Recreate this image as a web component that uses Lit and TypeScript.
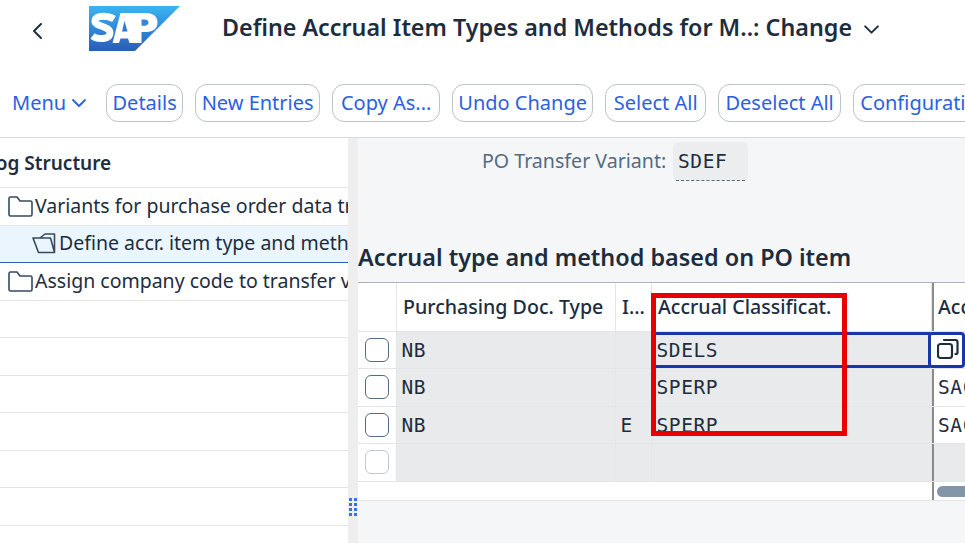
import { LitElement, html, css, svg } from "lit";
import { customElement } from "lit/decorators.js";

const chevron = (w: number, color: string) => html`<svg width=${w} height=${w} viewBox="0 0 16 16" fill="none" stroke=${color} stroke-width="1.8" stroke-linecap="round" stroke-linejoin="round"><path d="M2 5l6 6 6-6"/></svg>`;

const folder = html`<svg class="ico" width="25" height="21" viewBox="0 0 25 21" fill="none" stroke="#354a5f" stroke-width="1.6" stroke-linejoin="round"><path d="M1 5V2.500Q1 1 2.500 1H9l3 4h10.500Q24 5 24 6.500V18.500Q24 20 22.500 20H2.500Q1 20 1 18.500Z"/></svg>`;

const openFolder = html`<svg class="ico" width="24" height="21" viewBox="0 0 24 21" fill="none" stroke="#354a5f" stroke-width="1.6" stroke-linejoin="round"><path d="M1 5H8L13 1H22.500V19.500H6.500ZM8 5H18.500L22.500 19.500"/></svg>`;

const logo = svg`<svg width="91" height="45" viewBox="0 0 91 45">
  <defs><linearGradient id="g" x1="0" y1="0" x2="0" y2="1"><stop offset="0" stop-color="#3ab4f2"/><stop offset="1" stop-color="#2a5cb8"/></linearGradient></defs>
  <path d="M0 0H91L46 45H0Z" fill="url(#g)"/>
  <path fill="none" stroke="#fff" stroke-width="7" d="M25 13C19 9.500 7 8.500 6 14.500 5 21 21 19.500 21 27 21 33.500 9 34 3.500 30"/>
  <path fill="#fff" d="M23.500 37L31.500 7H44V37H40.500L39 32.500H31.500L30 37Z"/>
  <path fill="#fff" d="M43 7H57.500C64 7 68.500 10.500 68.500 16.500C68.500 22.500 64 26 57.500 26H52.500V37H43Z"/>
  <path fill="#2f78cf" d="M35.500 15L33 25.500H38.500Z"/>
  <path fill="#3a85d8" d="M52.500 13.500V19.800H55.500C58 19.800 59.500 18.500 59.500 16.600C59.500 14.700 58 13.500 55.500 13.500Z"/>
</svg>`;

@customElement("app-root")
export class AppRoot extends LitElement {
  static styles = css`
    :host { display: block; width: 965px; height: 543px; overflow: hidden; position: relative; background: #fff; font-family: "Noto Sans", "Open Sans", sans-serif; color: #1d2d3e; }
    svg { display: block; flex: none; }
    .head { height: 66px; display: flex; align-items: center; }
    .back { margin-left: 31px; width: 58px; }
    .back svg { margin-top: -4px; }
    .logo { margin-top: -9px; }
    .title { margin-left: 42px; font-size: 23.3px; font-weight: 600; line-height: 1; margin-top: -11px; white-space: nowrap; }
    .title-chev { margin: -7px 0 0 11px; }
    .bar { height: 72px; box-sizing: border-box; border-bottom: 1.5px solid #d9dadb; display: flex; align-items: flex-start; padding: 18px 0 0 12px; gap: 12px; font-size: 20px; white-space: nowrap; overflow: hidden; line-height: 36px; }
    .menu { height: 38px; display: flex; align-items: center; gap: 5px; margin-right: 7px; color: #2b5fe3; }
    .btn { height: 38px; box-sizing: border-box; border: 1.5px solid #bcc3ca; border-radius: 12px; display: flex; align-items: center; justify-content: center; flex: none; color: #2b5fe3; }
    .body { display: flex; height: 405px; }
    .left { width: 348px; flex: none; overflow: hidden; background: #fff; }
    .lhead { height: 50px; box-sizing: border-box; border-bottom: 1.5px solid #e5e5e5; font-size: 19px; font-weight: 600; line-height: 50px; margin-left: -40px; white-space: nowrap; }
    .lrow { height: 37.500px; box-sizing: border-box; border-bottom: 1.5px solid #e5e5e5; display: flex; align-items: center; gap: 2px; padding-left: 8px; font-size: 19.500px; white-space: nowrap; overflow: hidden; }
    .lrow span { margin-top: -2px; }
    .lrow.sel { background: #ebf5fe; border-bottom: 1.5px solid #2f5fc4; padding-left: 32px; gap: 3px; }
    .split { width: 10px; flex: none; background: #eeeeee; }
    .right { flex: 1; min-width: 0; background: #f5f6f7; display: flex; flex-direction: column; overflow: hidden; }
    .form { display: flex; align-items: flex-start; height: 104px; padding: 4px 0 0 124px; box-sizing: border-box; gap: 6px; }
    .lab { flex: none; width: 185px; color: #556b82; font-size: 19.600px; line-height: 39px; white-space: nowrap; margin-top: -1px; }
    .inp { width: 75px; height: 39px; box-sizing: border-box; background: #ecedee; border-radius: 6px; font-family: "DejaVu Sans Mono", "Liberation Mono", monospace; font-size: 19.500px; padding: 7px 0 0 5px; line-height: 26px; position: relative; letter-spacing: .6px; }
    .inp i { position: absolute; left: 3px; right: 3px; bottom: 0; border-bottom: 1.5px dashed #556b82; }
    h2 { margin: 0; height: 40px; font-size: 23.400px; font-weight: 600; line-height: 30px; white-space: nowrap; }
    .grid { border-top: 1.5px solid #a9b4be; width: 650px; background: #fff; }
    .row { display: grid; grid-template-columns: 39px 219px 36px 280px 2px 40px; border-bottom: 1.5px solid #e5e5e5; box-sizing: border-box; }
    .row.hd { height: 48.500px; font-size: 19.600px; font-weight: 500; }
    .row.d { height: 37.500px; }
    .c { border-right: 1.5px solid #e5e5e5; box-sizing: border-box; overflow: hidden; white-space: nowrap; display: flex; align-items: center; }
    .hd .c { padding-left: 6px; }
    .hd .c.last { padding-left: 4px; border: 0; }
    .d .c { background: #e9eaec; font-family: "DejaVu Sans Mono", "Liberation Mono", monospace; font-size: 19.500px; padding: 1px 0 0 4.500px; letter-spacing: .6px; }
    .d .c.sel { background: #fff; justify-content: center; padding: 0; }
    .d .c.last { background: #fff; border: 0; padding-left: 4px; }
    .d .c.blank { background: #e9eaec; border: 0; }
    .v { background: #8b8b8b; }
    .box { width: 24px; height: 24px; box-sizing: border-box; border: 1.5px solid #556b82; border-radius: 6px; background: #fff; }
    .box.off { border-color: #bfcad6; }
    .sbar { height: 19px; display: grid; grid-template-columns: 574px 2px 74px; border-bottom: 1.5px solid #e5e5e5; box-sizing: border-box; background: #fff; align-items: stretch; }
    .thumb { margin: 4px 0 3px 3px; background: #8396a8; border-radius: 6px 0 0 6px; }
    .ov { position: absolute; }
    .focus { left: 652px; top: 332px; width: 278px; height: 35.500px; box-sizing: border-box; border-top: 3px solid #1736a8; border-bottom: 3px solid #1736a8; }
    .vh { left: 928px; top: 332px; width: 37px; height: 36px; box-sizing: border-box; border: 3px solid #1736a8; border-radius: 4px; background: #fff; padding: 3px 0 0 6px; }
    .red { left: 651px; top: 293px; width: 196px; height: 143px; box-sizing: border-box; border: 5px solid #e80000; }
    .grip { left: 349px; top: 498px; display: grid; grid-template-columns: repeat(2, 3px); gap: 2px; }
    .grip b { width: 3px; height: 3px; background: #3b6fe6; }
  `;

  render() {
    const btns: [string, number][] = [["Details", 77], ["New Entries", 125], ["Copy As...", 108], ["Undo Change", 141], ["Select All", 101], ["Deselect All", 123], ["Configuration", 144]];
    const data = [
      ["NB", "", "SDELS", null],
      ["NB", "", "SPERP", "SAC"],
      ["NB", "E", "SPERP", "SAC"],
      ["", "", "", ""],
    ];
    return html`
      <div class="head">
        <div class="back"><svg width="14" height="18" viewBox="0 0 14 18" fill="none" stroke="#1d2d3e" stroke-width="2" stroke-linecap="round" stroke-linejoin="round"><path d="M10 2L3 9l7 7"/></svg></div>
        <div class="logo">${logo}</div>
        <div class="title">Define Accrual Item Types and Methods for M..: Change</div>
        <div class="title-chev">${chevron(17, "#1d2d3e")}</div>
      </div>
      <div class="bar">
        <div class="menu">Menu ${chevron(16, "#2b5fe3")}</div>
        ${btns.map(([b, w]) => html`<div class="btn" style="width:${w}px">${b}</div>`)}
      </div>
      <div class="body">
        <div class="left">
          <div class="lhead">Dialog Structure</div>
          <div class="lrow">${folder}<span>Variants for purchase order data transfer</span></div>
          <div class="lrow sel">${openFolder}<span>Define accr. item type and method</span></div>
          <div class="lrow">${folder}<span>Assign company code to transfer variant</span></div>
          ${[0, 1, 2, 3, 4, 5, 6].map(() => html`<div class="lrow"></div>`)}
        </div>
        <div class="split"></div>
        <div class="right">
          <div class="form">
            <div class="lab">PO Transfer Variant:</div>
            <div class="inp">SDEF<i></i></div>
          </div>
          <h2>Accrual type and method based on PO item</h2>
          <div class="grid">
            <div class="row hd">
              <div class="c"></div>
              <div class="c">Purchasing Doc. Type</div>
              <div class="c">I...</div>
              <div class="c">Accrual Classificat.</div>
              <div class="v"></div>
              <div class="c last">Acc</div>
            </div>
            ${data.map(
              (r, i) => html`<div class="row d">
                <div class="c sel"><div class="box ${i === 3 ? "off" : ""}"></div></div>
                <div class="c">${r[0]}</div>
                <div class="c">${r[1]}</div>
                <div class="c">${r[2]}</div>
                <div class="v"></div>
                <div class="c ${i === 3 ? "blank" : "last"}">${r[3]}</div>
              </div>`
            )}
            <div class="sbar"><div></div><div class="v"></div><div class="thumb"></div></div>
          </div>
        </div>
      </div>
      <div class="ov focus"></div>
      <div class="ov vh"><svg width="22" height="22" viewBox="0 0 22 22" fill="none" stroke="#1d2d3e" stroke-width="2.200" stroke-linejoin="round" stroke-linecap="round"><rect x="1" y="6" width="14" height="14" rx="2.500"/><path d="M7 2h11.500Q20.500 2 20.500 4V14.500Q20.500 16 18.500 16"/></svg></div>
      <div class="ov red"></div>
      <div class="ov grip">${Array.from({ length: 8 }).map(() => html`<b></b>`)}</div>
    `;
  }
}
